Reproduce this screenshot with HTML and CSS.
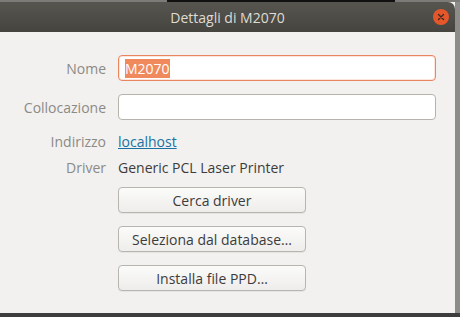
FILE: index.html
```html
<!DOCTYPE html>
<html>
<head>
	<meta charset="UTF-8">
	<title>Dettagli di M2070</title>
	<link rel="stylesheet" href="styles.css">
</head>
<body>
	<div class="desk-top">
		<span class="desk-grey"></span>
		<span class="desk-black"></span>
	</div>
	<div class="screen">
		<div class="window">
			<div class="titlebar">
				<span class="title">Dettagli di M2070</span>
				<span class="close">
					<svg width="16" height="16" viewBox="0 0 16 16">
						<circle cx="8" cy="8" r="8" fill="#e5572b"/>
						<path d="M5.5 5.5 L10.5 10.5 M10.5 5.5 L5.5 10.5" stroke="#3b2a22" stroke-width="1.4" stroke-linecap="round"/>
					</svg>
				</span>
			</div>
			<div class="content">
				<div class="row field-row">
					<label class="label">Nome</label>
					<div class="entry focus"><span class="sel">M2070</span></div>
				</div>
				<div class="row field-row">
					<label class="label">Collocazione</label>
					<div class="entry"></div>
				</div>
				<div class="row text-row addr">
					<span class="label">Indirizzo</span>
					<a href="javascript:;" class="link">localhost</a>
				</div>
				<div class="row text-row">
					<span class="label">Driver</span>
					<span class="value">Generic PCL Laser Printer</span>
				</div>
				<div class="buttons">
					<a href="javascript:;" class="btn">Cerca driver</a>
					<a href="javascript:;" class="btn">Seleziona dal database…</a>
					<a href="javascript:;" class="btn">Installa file PPD…</a>
				</div>
			</div>
		</div>
		<div class="side"></div>
	</div>
	<div class="desk-bottom"></div>
</body>
</html>
```
FILE: styles.css
```css
*{margin: 0;padding: 0;box-sizing: border-box;text-decoration: none;}
body{width: 460px;height: 317px;overflow: hidden;background: #7c7b77;font-family: "Open Sans", "Noto Sans", sans-serif;font-size: 14px;}
.desk-top{height: 2px;display: flex;}
.desk-grey{width: 167px;background: #7c7b77;}
.desk-black{width: 228px;background: #111;}
.screen{display: flex;height: 311px;}
.window{width: 455px;background: #f2f1f0;display: flex;flex-direction: column;}
.side{flex: 1;background: #8d8c88;}
.titlebar{height: 30px;background: linear-gradient(#56554f, #45443f);border-radius: 0 7px 0 0;display: flex;align-items: center;justify-content: center;position: relative;}
.title{color: #dfdbd2;font-size: 14px;}
.close{position: absolute;right: 6px;top: 7px;width: 16px;height: 16px;}
.close svg{display: block;}
.content{padding: 23px 0 0 0;}
.row{display: flex;align-items: center;}
.label{width: 106px;text-align: right;color: #8c8a85;margin-right: 12px;}
.field-row{height: 26px;margin-bottom: 13px;}
.entry{width: 318px;height: 26px;border: 1px solid #b6b3ad;border-radius: 4px;background: #fff;padding: 0 6px;display: flex;align-items: center;color: #3c3c3c;}
.entry.focus{border-color: #e9865e;box-shadow: inset 0 0 0 1px #fbe5dc;}
.sel{background: #f08a5d;color: #fff;line-height: 19px;}
.text-row{height: 20px;margin-bottom: 6px;}
.addr{margin-top: -2px;}
.link{color: #1a71a2;text-decoration: underline;}
.value{color: #3c3c3c;}
.buttons{display: flex;flex-direction: column;gap: 13px;margin: 10px 0 0 118px;}
.btn{width: 188px;height: 26px;border: 1px solid #b8b5b0;border-radius: 4px;background: linear-gradient(#fbfbfa, #eeedec);color: #3c3c3c;display: flex;align-items: center;justify-content: center;box-shadow: 0 1px 0 rgba(0,0,0,.05);}
.desk-bottom{height: 4px;background: #3d3d3d;}
```
